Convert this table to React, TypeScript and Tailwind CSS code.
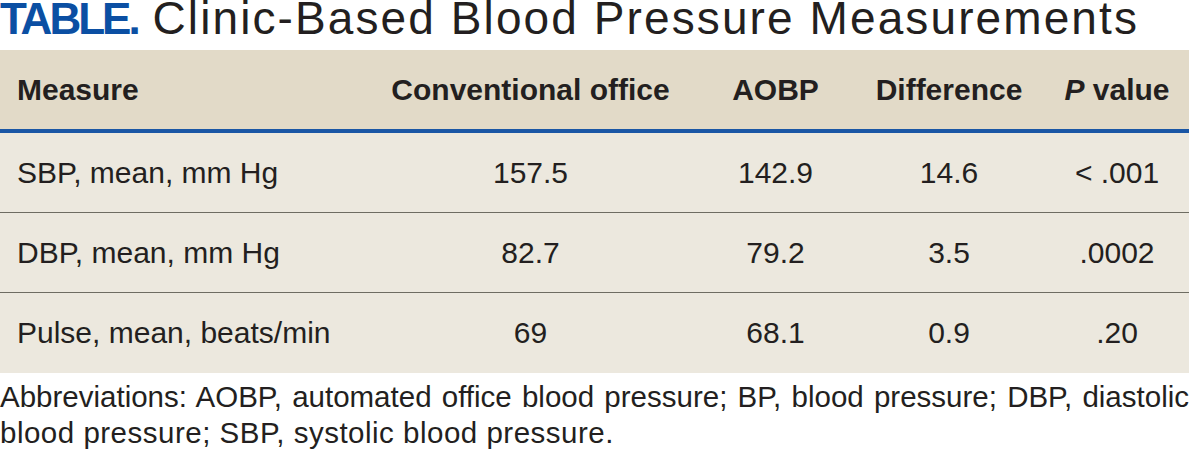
import React from 'react';

const rows = [
  { measure: 'SBP, mean, mm Hg', office: '157.5', aobp: '142.9', diff: '14.6', p: '< .001' },
  { measure: 'DBP, mean, mm Hg', office: '82.7', aobp: '79.2', diff: '3.5', p: '.0002' },
  { measure: 'Pulse, mean, beats/min', office: '69', aobp: '68.1', diff: '0.9', p: '.20' },
];

const cols = 'grid grid-cols-[363px_335px_155px_192px_1fr]';

export default function App() {
  return (
    <div className="w-[1189px] h-[450px] bg-white text-[#231f20] font-['Liberation_Sans',Arial,sans-serif] overflow-hidden">
      <div className="h-[50px] text-[46px] leading-[37px] whitespace-nowrap">
        <span className="font-bold text-[44px] text-[#0b4fa3] tracking-[-3px]">TABLE.</span>
        <span className="tracking-[2.1px]"> Clinic-Based Blood Pressure Measurements</span>
      </div>

      <div className="bg-[#ece8de]">
        <div className={`${cols} h-[79px] items-center bg-[#e2dac8] text-[30px] font-bold border-b-4 border-[#1a56a5] box-content`}>
          <div className="pl-[17px]">Measure</div>
          <div className="text-center">Conventional office</div>
          <div className="text-center">AOBP</div>
          <div className="text-center">Difference</div>
          <div className="text-center">
            <i>P</i> value
          </div>
        </div>
        {rows.map((r, i) => (
          <div
            key={r.measure}
            className={`${cols} h-[79px] items-center text-[30px] ${i < rows.length - 1 ? 'border-b border-[#6e6c62] box-content' : 'pb-px box-content'}`}
          >
            <div className="pl-[17px] whitespace-nowrap">{r.measure}</div>
            <div className="text-center">{r.office}</div>
            <div className="text-center">{r.aobp}</div>
            <div className="text-center">{r.diff}</div>
            <div className="text-center">{r.p}</div>
          </div>
        ))}
      </div>

      <div className="pt-[6px] text-[29.5px] leading-[36px]">
        <p className="text-justify [text-align-last:justify] whitespace-nowrap">
          Abbreviations: AOBP, automated office blood pressure; BP, blood pressure; DBP, diastolic
        </p>
        <p className="tracking-[0.5px]">blood pressure; SBP, systolic blood pressure.</p>
      </div>
    </div>
  );
}
